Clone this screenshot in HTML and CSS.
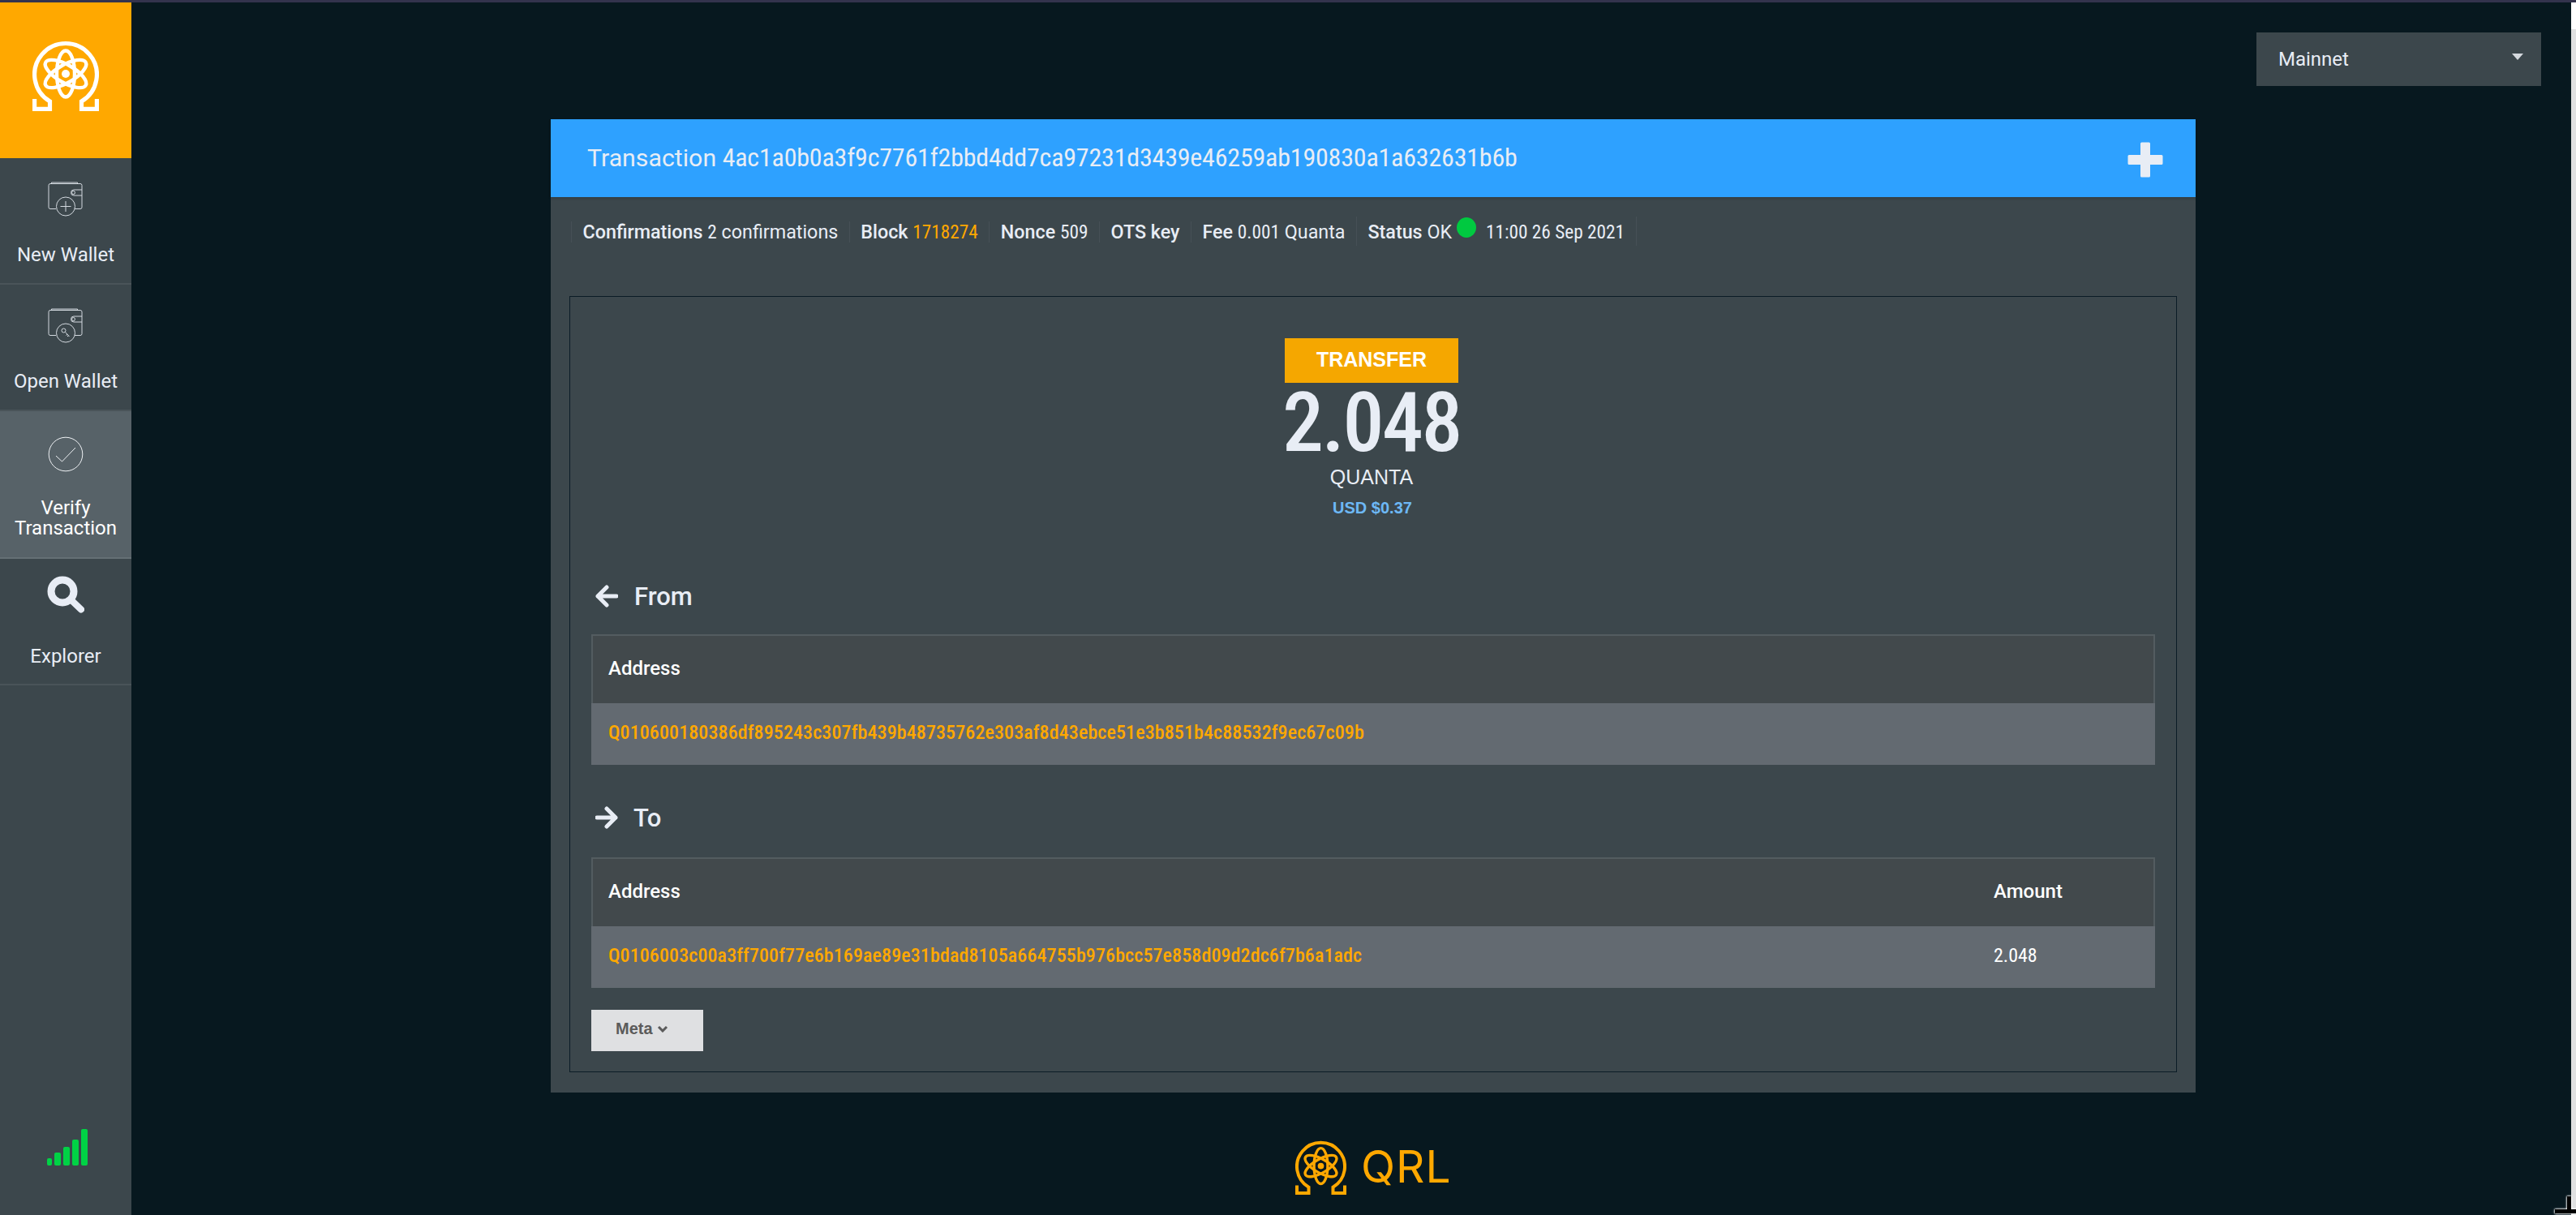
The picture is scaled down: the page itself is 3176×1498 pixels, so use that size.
FILE: index.html
```html
<!DOCTYPE html>
<html lang="en">
<head>
  <meta charset="UTF-8" />
  <title>QRL Wallet</title>
  <link rel="stylesheet" href="styles.css">
</head>
<body>
  <svg class="defs" width="0" height="0">
    <symbol id="qrl-logo" viewBox="0 0 82 87">
      <path d="M2.6 72V84.4H21.5V75A38.4 38.4 0 1 1 60.5 75V84.4H79.4V72" fill="none" stroke="currentColor" stroke-width="5.2" />
      <g fill="none" stroke="currentColor" stroke-width="4.4">
        <ellipse cx="41" cy="41" rx="11" ry="28.5" />
        <ellipse cx="41" cy="41" rx="11" ry="28.5" transform="rotate(60 41 41)" />
        <ellipse cx="41" cy="41" rx="11" ry="28.5" transform="rotate(-60 41 41)" />
      </g>
      <circle cx="41" cy="41" r="5" fill="currentColor" />
    </symbol>
    <symbol id="wallet" viewBox="0 0 44 44">
      <g fill="none" stroke="currentColor" stroke-width="1">
        <path d="M4.500 2.500V1H36.500V2.500" />
        <path d="M10 33.500H3A2 2 0 0 1 1 31.500V4.500A2 2 0 0 1 3 2.500H40A2 2 0 0 1 42 4.500V31.500A2 2 0 0 1 40 33.500H33" />
        <path d="M42 10H32A3.500 3.500 0 0 0 32 17H42" />
        <circle cx="31.500" cy="13.500" r="2" />
      </g>
    </symbol>
  </svg>

  <div class="topline"></div>
  <div class="app">
    <nav class="sidebar">
      <div class="brand">
        <svg class="brand-logo"><use href="#qrl-logo" /></svg>
      </div>
      <a class="nav-item">
        <svg class="nav-icon" viewBox="0 0 44 44">
          <use href="#wallet" width="44" height="44" />
          <circle cx="22" cy="30.500" r="11.500" class="nav-disc" />
          <path d="M22 24V37M15.500 30.500H28.500" class="nav-line" />
        </svg>
        <span>New Wallet</span>
      </a>
      <a class="nav-item">
        <svg class="nav-icon" viewBox="0 0 44 44">
          <use href="#wallet" width="44" height="44" />
          <circle cx="22" cy="30.500" r="11.500" class="nav-disc" />
          <circle cx="19.500" cy="27.500" r="2.500" class="nav-line" />
          <path d="M21.500 29.500L26.500 35M24 32L22.500 33.500M25.500 33.500L24 35" class="nav-line" />
        </svg>
        <span>Open Wallet</span>
      </a>
      <a class="nav-item active">
        <svg class="nav-icon" viewBox="0 0 44 44">
          <circle cx="22" cy="22" r="20.800" class="nav-line" />
          <path d="M10 24L17.500 31L34 14" class="nav-line" />
        </svg>
        <span>Verify Transaction</span>
      </a>
      <a class="nav-item explorer">
        <svg class="nav-icon search" viewBox="0 0 46 46">
          <circle cx="19" cy="19" r="14" fill="none" stroke="currentColor" stroke-width="9" />
          <path d="M30 30L42 41.500" fill="none" stroke="currentColor" stroke-width="8" stroke-linecap="round" />
        </svg>
        <span>Explorer</span>
      </a>
      <div class="signal">
        <i class="bar b1"></i><i class="bar b2"></i><i class="bar b3"></i><i class="bar b4"></i><i class="bar b5"></i>
      </div>
    </nav>

    <main class="content">
      <div class="toolbar">
        <div class="network">
          <span>Mainnet</span>
          <i class="caret"></i>
        </div>
      </div>

      <section class="panel">
        <header class="panel-head">
          <h1>Transaction <span class="hash">4ac1a0b0a3f9c7761f2bbd4dd7ca97231d3439e46259ab190830a1a632631b6b</span></h1>
          <svg class="plus" viewBox="0 0 44 44"><path d="M16 2A1.500 1.500 0 0 1 17.500 .500H26.500A1.500 1.500 0 0 1 28 2V16H42A1.500 1.500 0 0 1 43.500 17.500V26.500A1.500 1.500 0 0 1 42 28H28V42A1.500 1.500 0 0 1 26.500 43.500H17.500A1.500 1.500 0 0 1 16 42V28H2A1.500 1.500 0 0 1 .500 26.500V17.500A1.500 1.500 0 0 1 2 16H16Z" /></svg>
        </header>

        <ul class="facts">
          <li><b>Confirmations</b> <span class="num">2</span> confirmations</li>
          <li><b>Block</b> <em class="num">1718274</em></li>
          <li><b>Nonce</b> <span class="num">509</span></li>
          <li><b>OTS key</b></li>
          <li><b>Fee</b> <span class="num">0.001</span> Quanta</li>
          <li class="fact-status"><span><b>Status</b> OK</span> <i class="dot"></i> <span class="num">11:00 26 Sep 2021</span></li>
        </ul>

        <div class="box">
          <div class="summary">
            <div class="tx-type">TRANSFER</div>
            <div class="tx-amount">2.048</div>
            <div class="tx-unit">QUANTA</div>
            <div class="tx-usd">USD $0.37</div>
          </div>

          <h2 class="side-title from">
            <svg class="arrow" viewBox="0 0 28 28"><path d="M26 14H3M14 3L3 14L14 25" /></svg>
            From
          </h2>
          <table class="addr-table">
            <thead><tr><th>Address</th></tr></thead>
            <tbody><tr><td class="addr">Q010600180386df895243c307fb439b48735762e303af8d43ebce51e3b851b4c88532f9ec67c09b</td></tr></tbody>
          </table>

          <h2 class="side-title to">
            <svg class="arrow" viewBox="0 0 28 28"><path d="M2 14H25M14 3L25 14L14 25" /></svg>
            To
          </h2>
          <table class="addr-table">
            <thead><tr><th>Address</th><th class="amount-col">Amount</th></tr></thead>
            <tbody><tr><td class="addr">Q0106003c00a3ff700f77e6b169ae89e31bdad8105a664755b976bcc57e858d09d2dc6f7b6a1adc</td><td class="amount-col num">2.048</td></tr></tbody>
          </table>

          <button class="meta-btn">Meta <svg class="chevron" viewBox="0 0 14 9"><path d="M2 2L7 7L12 2" /></svg></button>
        </div>
      </section>

      <footer class="foot">
        <svg class="foot-logo"><use href="#qrl-logo" /></svg>
        <span class="foot-name">QRL</span>
      </footer>
    </main>
    <div class="scrollbar"></div>
  </div>

  <!-- mouse pointer caught in the capture -->
  <svg class="pointer" viewBox="0 0 28 25"><path d="M19.500 2V20.500M2 20.500H28" /></svg>
</body>
</html>
```

FILE: styles.css
```css
* {
  box-sizing: border-box;
}

html, body {
  height: 100%;
}

body {
  margin: 0;
  background: #07181f;
  color: #e8edf5;
  font-family: Roboto, sans-serif;
  overflow: hidden;
}

.defs {
  position: absolute;
}

.topline {
  height: 3px;
  background: #33334d;
}

.app {
  display: flex;
  height: 1495px;
}

/* digits and hashes are narrower than the labels */
.num, .hash, .addr {
  font-family: "Roboto Condensed", Roboto, sans-serif;
  font-stretch: 85%;
}

/* sidebar */
.sidebar {
  width: 162px;
  flex: none;
  background: #3c474c;
  display: flex;
  flex-direction: column;
}

.brand {
  height: 192px;
  background: #ffa800;
  color: #fff;
  padding-top: 47px;
  display: flex;
  justify-content: center;
}

.brand-logo {
  width: 82px;
  height: 87px;
}

.nav-item {
  display: flex;
  flex-direction: column;
  align-items: center;
  height: 156px;
  padding-top: 29px;
  border-bottom: 2px solid #4a5459;
  font-size: 24px;
  line-height: 25px;
  text-align: center;
  color: #e8edf5;
}

.nav-item.active {
  height: 182px;
  background: #576268;
  border-bottom-color: #657075;
  color: #fff;
  padding-top: 31px;
}

.nav-item.explorer {
  padding-top: 21px;
}

.nav-icon {
  width: 44px;
  height: 44px;
  color: #d3d9df;
  margin-bottom: 34px;
  flex: none;
}

.nav-item.active .nav-icon {
  color: #eef1f4;
  margin-bottom: 32px;
}

.nav-icon.search {
  width: 46px;
  height: 46px;
  color: #e8edf5;
  margin-bottom: 41px;
}

.nav-line {
  fill: none;
  stroke: currentColor;
  stroke-width: 1;
}

.nav-disc {
  fill: #3c474c;
  stroke: currentColor;
  stroke-width: 1;
}

.signal {
  margin-top: auto;
  margin-bottom: 61px;
  padding-left: 4px;
  height: 45px;
  display: flex;
  justify-content: center;
  align-items: flex-end;
  gap: 3px;
}

.bar {
  width: 8px;
  border-radius: 2px;
  background: #00d245;
}

.b1 { width: 6px; height: 9px; }
.b2 { height: 16px; }
.b3 { height: 23px; }
.b4 { height: 32px; }
.b5 { height: 45px; }

/* main column */
.content {
  flex: 1;
  display: flex;
  flex-direction: column;
}

.toolbar {
  width: 100%;
  height: 144px;
  padding: 37px 37px 0 0;
  display: flex;
  justify-content: flex-end;
}

.network {
  width: 351px;
  height: 66px;
  background: #3c474c;
  padding: 0 22px 0 27px;
  display: flex;
  align-items: center;
  justify-content: space-between;
  font-size: 24px;
}

.caret {
  width: 0;
  height: 0;
  border-left: 7px solid transparent;
  border-right: 7px solid transparent;
  border-top: 8px solid #d5d9de;
  margin-bottom: 6px;
}

.panel {
  width: 2028px;
  height: 1200px;
  margin-left: 517px;
  background: #3c474c;
}

.panel-head {
  height: 96px;
  background: #2ea1ff;
  padding: 0 40px 0 45px;
  display: flex;
  align-items: center;
  justify-content: space-between;
  box-shadow: 0 2px 3px rgba(0, 0, 0, .15);
}

.panel-head h1 {
  margin: 0 0 2px;
  font-size: 30.3px;
  font-weight: 400;
}

.hash {
  font-size: 32px;
  letter-spacing: -.2px;
}

.plus {
  width: 44px;
  height: 44px;
  margin-top: 4px;
  fill: #e8edf5;
}

/* info list */
.facts {
  list-style: none;
  margin: 0;
  padding: 30px 0 0 25px;
  height: 122px;
  display: flex;
  align-items: flex-start;
  font-size: 23.3px;
}

.facts li {
  padding: 0 13.5px;
  height: 26px;
  line-height: 26px;
  border-left: 1px solid #465056;
  white-space: nowrap;
}

.facts b {
  font-weight: 500;
}

.facts em {
  font-style: normal;
  color: #ffa800;
}

.facts .fact-status {
  height: 36px;
  margin-top: -6px;
  padding-top: 6px;
  border-right: 1px solid #465056;
  display: flex;
  gap: 6px;
}

.dot {
  display: block;
  width: 24px;
  height: 25px;
  border-radius: 50%;
  background: #00c940;
  margin: -5px 6px 0 0;
}

/* inner box */
.box {
  margin: 0 23px;
  height: 957px;
  border: 1px solid #0b1c26;
  padding: 0 26px;
}

.summary {
  display: flex;
  flex-direction: column;
  align-items: center;
  font-family: "Liberation Sans", Arial, sans-serif;
  height: 336px;
  padding: 51px 4px 0 0;
}

.tx-type {
  width: 214px;
  height: 55px;
  line-height: 53px;
  background: #f5a700;
  color: #fff;
  font-size: 25px;
  font-weight: 700;
  text-align: center;
}

.tx-amount {
  font-family: "Roboto Condensed", Roboto, sans-serif;
  font-stretch: 85%;
  font-size: 102px;
  font-weight: 500;
  letter-spacing: -2.5px;
  line-height: 88px;
  margin-top: 5px;
}

.tx-unit {
  font-size: 25px;
  line-height: 30px;
  margin-top: 8px;
}

.tx-usd {
  font-size: 20px;
  font-weight: 700;
  line-height: 24px;
  margin: 11px 0 0 2px;
  color: #6db8f5;
}

.side-title {
  display: flex;
  align-items: center;
  margin: 0;
  gap: 20px;
  padding-left: 5px;
  font-size: 31px;
  font-weight: 500;
}

.side-title.from {
  height: 66px;
  margin-bottom: 14px;
}

.side-title.to {
  height: 114px;
  padding-top: 16px;
  gap: 19px;
}

.arrow {
  width: 28px;
  height: 28px;
  fill: none;
  stroke: currentColor;
  stroke-width: 5;
  stroke-linecap: round;
  stroke-linejoin: round;
}

.addr-table {
  width: 1928px;
  border-collapse: separate;
  border-spacing: 0;
  font-size: 24px;
}

.addr-table th {
  height: 85px;
  padding: 0 21px 3px 19px;
  background: #42494c;
  color: #fff;
  text-align: left;
  font-weight: 500;
  border-top: 2px solid #535c60;
  border-left: 2px solid #535c60;
}

.addr-table th:last-child {
  border-right: 2px solid #535c60;
}

.addr-table th.amount-col {
  border-left: none;
  padding-left: 21px;
}

.addr-table td {
  height: 76px;
  padding: 0 21px 4px;
  background: #636a71;
  color: #fff;
}

.addr-table td.addr {
  color: #ffa800;
  font-weight: 500;
  letter-spacing: .1px;
}

.amount-col {
  width: 220px;
}

.meta-btn {
  display: flex;
  align-items: center;
  gap: 5px;
  width: 138px;
  height: 51px;
  margin-top: 27px;
  padding: 0 0 4px 30px;
  border: none;
  background: #dfe0e2;
  color: #5b5b5b;
  font-family: "Liberation Sans", Arial, sans-serif;
  font-size: 20px;
  font-weight: 700;
}

.chevron {
  width: 14px;
  height: 9px;
  fill: none;
  stroke: currentColor;
  stroke-width: 3;
}

.foot {
  display: flex;
  align-items: flex-start;
  gap: 18px;
  margin-top: 59px;
  margin-left: 1435px;
}

.foot-logo {
  width: 63px;
  height: 67px;
  color: #ffa800;
}

.foot-name {
  font-family: Inter, sans-serif;
  font-size: 55px;
  line-height: 54px;
  letter-spacing: 1px;
  color: #ffa800;
  margin-top: 5px;
}

.scrollbar {
  width: 6px;
  flex: none;
  background: linear-gradient(#fff 33px, #dfe0e1 33px);
}

.pointer {
  position: absolute;
  right: 0;
  bottom: 0;
  width: 28px;
  height: 25px;
  fill: none;
  stroke: #000;
  stroke-width: 5;
  filter: drop-shadow(0 0 1px #fff) drop-shadow(0 0 1px #fff);
}
```
